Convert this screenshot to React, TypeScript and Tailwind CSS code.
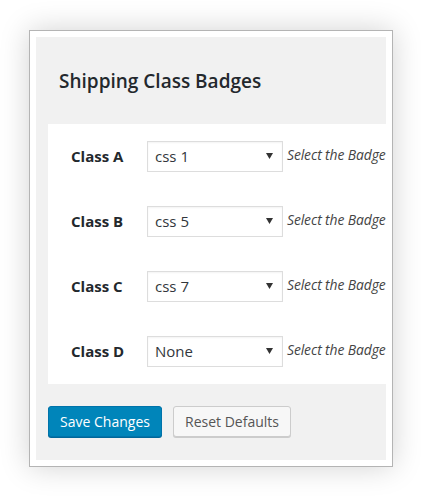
import React from 'react'

const rows = [
    { label: 'Class A', value: 'css 1' },
    { label: 'Class B', value: 'css 5' },
    { label: 'Class C', value: 'css 7' },
    { label: 'Class D', value: 'None' },
]

function FakeSelect({ value }: { value: string }) {
    return (
        <div className="w-[136px] h-[31px] shrink-0 border border-[#dddddd] bg-white flex items-center justify-between pl-[7px] pr-[9px] shadow-[inset_0_1px_2px_rgba(0,0,0,0.05)]">
            <span className="text-[15px] text-[#32373c]">{value}</span>
            <svg width="7" height="6" viewBox="0 0 7 6" className="mt-[-1px]">
                <path d="M0 0 H7 L3.5 6 Z" fill="#333" />
            </svg>
        </div>
    )
}

export default function App() {
    return (
        <div className="w-[421px] h-[498px] bg-white pt-[30px] pl-[29px] font-['Open_Sans',sans-serif]">
            <div className="w-[364px] h-[437px] border border-[#b4b4b4] bg-white p-[6px] shadow-[0_0_28px_rgba(0,0,0,0.18)]">
                <div className="h-full bg-[#f1f1f1] flex flex-col">
                    <h2 className="pl-[23px] pt-[31px] text-[19px] leading-[27px] font-semibold text-[#23282d]">
                        Shipping Class Badges
                    </h2>
                    <div className="ml-[12px] mt-[29px] h-[260px] bg-white pt-[17px]">
                        <div className="flex flex-col gap-[34px]">
                            {rows.map((r) => (
                                <div key={r.label} className="flex items-center">
                                    <div className="w-[99px] shrink-0 pl-[23px] text-[15px] font-bold text-[#23282d]">{r.label}</div>
                                    <FakeSelect value={r.value} />
                                    <span className="ml-[4px] mt-[-3px] whitespace-nowrap italic text-[13.9px] tracking-[-0.1px] text-[#444]">Select the Badge</span>
                                </div>
                            ))}
                        </div>
                    </div>
                    <div className="ml-[12px] mt-[22px] flex gap-[11px]">
                        <button className="w-[114px] h-[31px] rounded-[3px] bg-[#0085ba] border border-[#0073aa] text-white text-[14px] shadow-[0_1px_0_#006799]">
                            Save Changes
                        </button>
                        <button className="w-[118px] h-[31px] rounded-[3px] bg-[#f7f7f7] border border-[#cccccc] text-[#555] text-[14px] shadow-[0_1px_0_#cccccc]">
                            Reset Defaults
                        </button>
                    </div>
                </div>
            </div>
        </div>
    )
}
